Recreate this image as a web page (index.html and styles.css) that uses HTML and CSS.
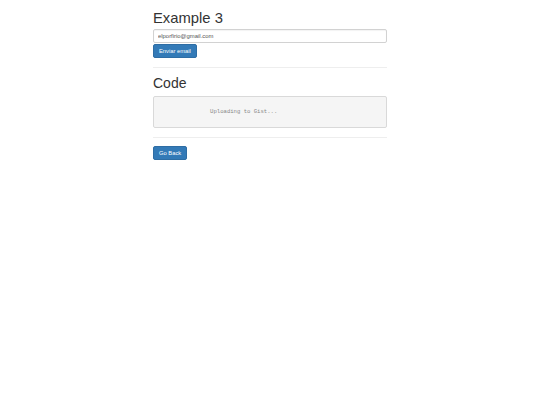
FILE: index.html
```html
<!DOCTYPE html>
<html lang="en">
<head>
    <meta charset="UTF-8">
    <meta name="viewport" content="width=device-width, initial-scale=1.0">
    <title>Example 3</title>
    <link rel="stylesheet" href="styles.css">
</head>
<body>

<div class="container">
    <h1>Example 3</h1>
    <form class="email-form">
        <input type="email" class="form-control" value="elporfirio@gmail.com">
        <button type="button" class="btn">Enviar email</button>
    </form>

    <hr>

    <h2>Code</h2>
    <pre class="code-box">

		Uploading to Gist...
</pre>

    <hr class="sep">

    <button type="button" class="btn">Go Back</button>
</div>

</body>
</html>
```

FILE: styles.css
```css
body {
    font-family: 'Liberation Sans', Arial, sans-serif;
    margin: 0;
    color: #333;
    background-color: #fff;
}

.container {
    width: 234px;
    margin: 0 auto;
}

h1 {
    font-size: 14.8px;
    font-weight: 500;
    line-height: 16px;
    margin: 10px 0 3px;
}

h2 {
    font-size: 14px;
    font-weight: 500;
    line-height: 15.4px;
    margin: 0 0 4.6px;
}

.email-form {
    margin: 0;
}

.form-control {
    display: block;
    box-sizing: border-box;
    width: 100%;
    height: 14px;
    padding: 0 4px;
    border: 1px solid #d2d2d2;
    border-radius: 2px;
    font-family: 'Liberation Sans', Arial, sans-serif;
    font-size: 5.9px;
    color: #555;
    box-shadow: inset 0 1px 1px rgba(0, 0, 0, 0.05);
}

.btn {
    display: block;
    box-sizing: border-box;
    height: 14px;
    margin-top: 1px;
    padding: 0 5px;
    background-color: #337ab7;
    border: 1px solid #2e6da4;
    border-radius: 2px;
    color: #fff;
    font-family: 'Liberation Sans', Arial, sans-serif;
    font-size: 5.8px;
    line-height: 12px;
    cursor: pointer;
}

hr {
    border: 0;
    border-top: 1px solid #eee;
    margin: 9px 0 8px;
}

.code-box {
    box-sizing: border-box;
    height: 32px;
    margin: 0;
    padding: 3px 2.4px;
    background-color: #f5f5f5;
    border: 1px solid #d9d9d9;
    border-radius: 2px;
    font-family: 'Liberation Mono', 'Courier New', monospace;
    font-size: 5.6px;
    line-height: 8px;
    tab-size: 8;
    color: #888;
}
```
